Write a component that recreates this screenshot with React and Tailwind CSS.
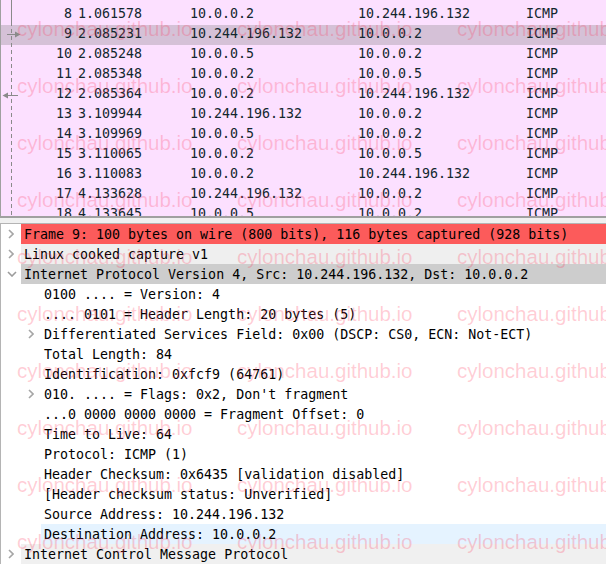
import React from 'react';

const packets = [
  ['8', '1.061578', '10.0.0.2', '10.244.196.132'],
  ['9', '2.085231', '10.244.196.132', '10.0.0.2'],
  ['10', '2.085248', '10.0.0.5', '10.0.0.2'],
  ['11', '2.085348', '10.0.0.2', '10.0.0.5'],
  ['12', '2.085364', '10.0.0.2', '10.244.196.132'],
  ['13', '3.109944', '10.244.196.132', '10.0.0.2'],
  ['14', '3.109969', '10.0.0.5', '10.0.0.2'],
  ['15', '3.110065', '10.0.0.2', '10.0.0.5'],
  ['16', '3.110083', '10.0.0.2', '10.244.196.132'],
  ['17', '4.133628', '10.244.196.132', '10.0.0.2'],
  ['18', '4.133645', '10.0.0.5', '10.0.0.2'],
];

// level 0 = protocol line, level 1 = field inside IPv4
const tree = [
  { level: 0, text: 'Frame 9: 100 bytes on wire (800 bits), 116 bytes captured (928 bits)', bg: 'bg-[#fc5b5b]', arrow: 'right' },
  { level: 0, text: 'Linux cooked capture v1', bg: 'bg-[#efefef]', arrow: 'right' },
  { level: 0, text: 'Internet Protocol Version 4, Src: 10.244.196.132, Dst: 10.0.0.2', bg: 'bg-[#cdcdcd]', arrow: 'down' },
  { level: 1, text: '0100 .... = Version: 4' },
  { level: 1, text: '.... 0101 = Header Length: 20 bytes (5)' },
  { level: 1, text: 'Differentiated Services Field: 0x00 (DSCP: CS0, ECN: Not-ECT)', arrow: 'right' },
  { level: 1, text: 'Total Length: 84' },
  { level: 1, text: 'Identification: 0xfcf9 (64761)' },
  { level: 1, text: '010. .... = Flags: 0x2, Don\'t fragment', arrow: 'right' },
  { level: 1, text: '...0 0000 0000 0000 = Fragment Offset: 0' },
  { level: 1, text: 'Time to Live: 64' },
  { level: 1, text: 'Protocol: ICMP (1)' },
  { level: 1, text: 'Header Checksum: 0x6435 [validation disabled]' },
  { level: 1, text: '[Header checksum status: Unverified]' },
  { level: 1, text: 'Source Address: 10.244.196.132' },
  { level: 1, text: 'Destination Address: 10.0.0.2', bg: 'bg-[#e5f3ff]' },
  { level: 0, text: 'Internet Control Message Protocol', bg: 'bg-[#f0f0f0]', arrow: 'right' },
];

function Chevron({ dir }) {
  if (dir === 'down') {
    return (
      <svg width="10" height="6" viewBox="0 0 10 6" className="block">
        <path d="M1 1 L5 5 L9 1" fill="none" stroke="#9c9c9c" strokeWidth="1.6" />
      </svg>
    );
  }
  return (
    <svg width="6" height="10" viewBox="0 0 6 10" className="block">
      <path d="M1 1 L5 5 L1 9" fill="none" stroke="#a6a6a6" strokeWidth="1.6" />
    </svg>
  );
}

function Watermark() {
  const rows = Array.from({ length: 10 });
  return (
    <div className="pointer-events-none absolute inset-0 overflow-hidden pt-[19px] flex flex-col font-['Liberation_Sans',sans-serif] text-[20.5px] leading-5 text-[rgba(255,55,90,0.25)]">
      {rows.map((_, i) => (
        <div key={i} className="h-[57px] shrink-0 flex pl-[17px]">
          <span className="w-[220px] shrink-0 whitespace-nowrap">cylonchau.github.io</span>
          <span className="w-[220px] shrink-0 whitespace-nowrap">cylonchau.github.io</span>
          <span className="w-[220px] shrink-0 whitespace-nowrap">cylonchau.github.io</span>
        </div>
      ))}
    </div>
  );
}

function PacketList() {
  return (
    <div className="relative h-[218px] bg-[#fce0ff] border-l border-b-2 border-[#a0a0a0] overflow-hidden text-[#12272e]">
      <div className="pt-[5px]">
        {packets.map(([no, time, src, dst]) => (
          <div key={no} className={`flex h-5 leading-[17px] whitespace-nowrap ${no === '9' ? 'bg-[#d5c1d7]' : ''}`}>
            <span className="w-[71px] shrink-0 text-right">{no}</span>
            <span className="w-[112px] shrink-0 ml-[6px]">{time}</span>
            <span className="w-[168px] shrink-0">{src}</span>
            <span className="w-[168px] shrink-0">{dst}</span>
            <span>ICMP</span>
          </div>
        ))}
      </div>
      <svg width="24" height="216" className="absolute left-0 top-0">
        <line x1="10.5" y1="0" x2="10.5" y2="22" stroke="#8a8a8a" strokeWidth="1" />
        <line x1="10.5" y1="22" x2="10.5" y2="216" stroke="#8a8a8a" strokeWidth="1" strokeDasharray="4 3" />
        <line x1="6" y1="34.5" x2="15" y2="34.5" stroke="#8a8a8a" strokeWidth="1" />
        <path d="M14 31.5 L19.5 34.5 L14 37.5 Z" fill="#8a8a8a" />
        <line x1="6" y1="95.5" x2="17" y2="95.5" stroke="#8a8a8a" strokeWidth="1" />
        <path d="M7 92.5 L1.5 95.5 L7 98.5 Z" fill="#8a8a8a" />
      </svg>
    </div>
  );
}

function Details() {
  return (
    <div className="border-l border-t border-[#b4b4b4] bg-white text-black">
      {tree.map((row, i) => (
        <div key={i} className="flex h-5 whitespace-nowrap">
          <div className={`${row.level === 0 ? 'w-[20px]' : 'w-[40px]'} shrink-0 flex items-center`}>
            {row.arrow && (
              <div className={row.level === 0 ? (row.arrow === 'down' ? 'ml-[6px]' : 'ml-[7px]') : 'ml-[27px]'}>
                <Chevron dir={row.arrow} />
              </div>
            )}
          </div>
          <div className={`flex-1 pl-[3px] pt-[1px] leading-[19px] ${row.bg || ''}`}>{row.text}</div>
        </div>
      ))}
    </div>
  );
}

export default function App() {
  return (
    <div className="relative w-[606px] h-[565px] overflow-hidden bg-white font-['DejaVu_Sans_Mono',monospace] text-[13.3px]">
      <PacketList />
      <div className="h-[5px] bg-[#f0f0f0]" />
      <Details />
      <Watermark />
    </div>
  );
}
